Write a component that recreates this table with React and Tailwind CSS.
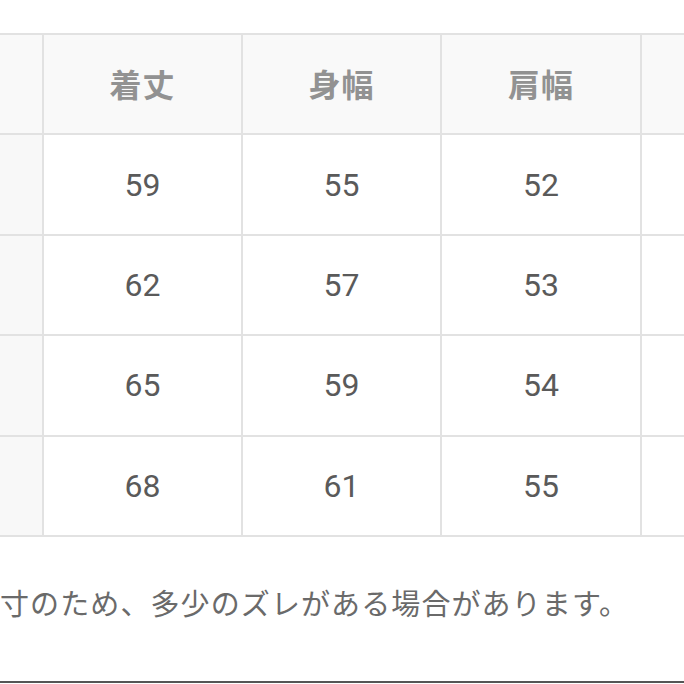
import React from "react";

const headers = ["", "着丈", "身幅", "肩幅", ""];
const rows = [
  ["59", "55", "52"],
  ["62", "57", "53"],
  ["65", "59", "54"],
  ["68", "61", "55"],
];

export default function App() {
  const jp = { fontFamily: '"Noto Sans CJK JP", "Noto Sans", sans-serif' };
  const num = { fontFamily: 'Roboto, "Noto Sans", sans-serif' };
  return (
    <div className="w-[684px] h-[684px] bg-white overflow-hidden flex flex-col">
      <div className="mt-[33px] grid grid-cols-[42px_197px_197px_198px_42px] grid-rows-[repeat(5,98.4px)] gap-[2px] py-[2px] bg-[#e2e2e2] w-[684px]">
        {headers.map((h, i) => (
          <div
            key={"h" + i}
            className="bg-[#f9f9f9] flex items-center justify-center pb-[3px] text-[32px] font-bold text-[#929292] tracking-[1px]"
            style={jp}
          >
            {h}
          </div>
        ))}
        {rows.map((r, ri) => (
          <React.Fragment key={ri}>
            <div className="bg-[#f8f8f8]" />
            {r.map((v, ci) => (
              <div
                key={ci}
                className="bg-white flex items-center justify-center text-[32px] text-[#5a5a5a]"
                style={num}
              >
                {v}
              </div>
            ))}
            <div className="bg-white" />
          </React.Fragment>
        ))}
      </div>
      <div
        className="mt-[51px] text-[29px] tracking-[1.1px] leading-none text-[#6a6a6a] whitespace-nowrap"
        style={jp}
      >
        寸のため、多少のズレがある場合があります。
      </div>
      <div className="mt-auto mb-[1px] h-[2px] bg-[#555555]" />
    </div>
  );
}
